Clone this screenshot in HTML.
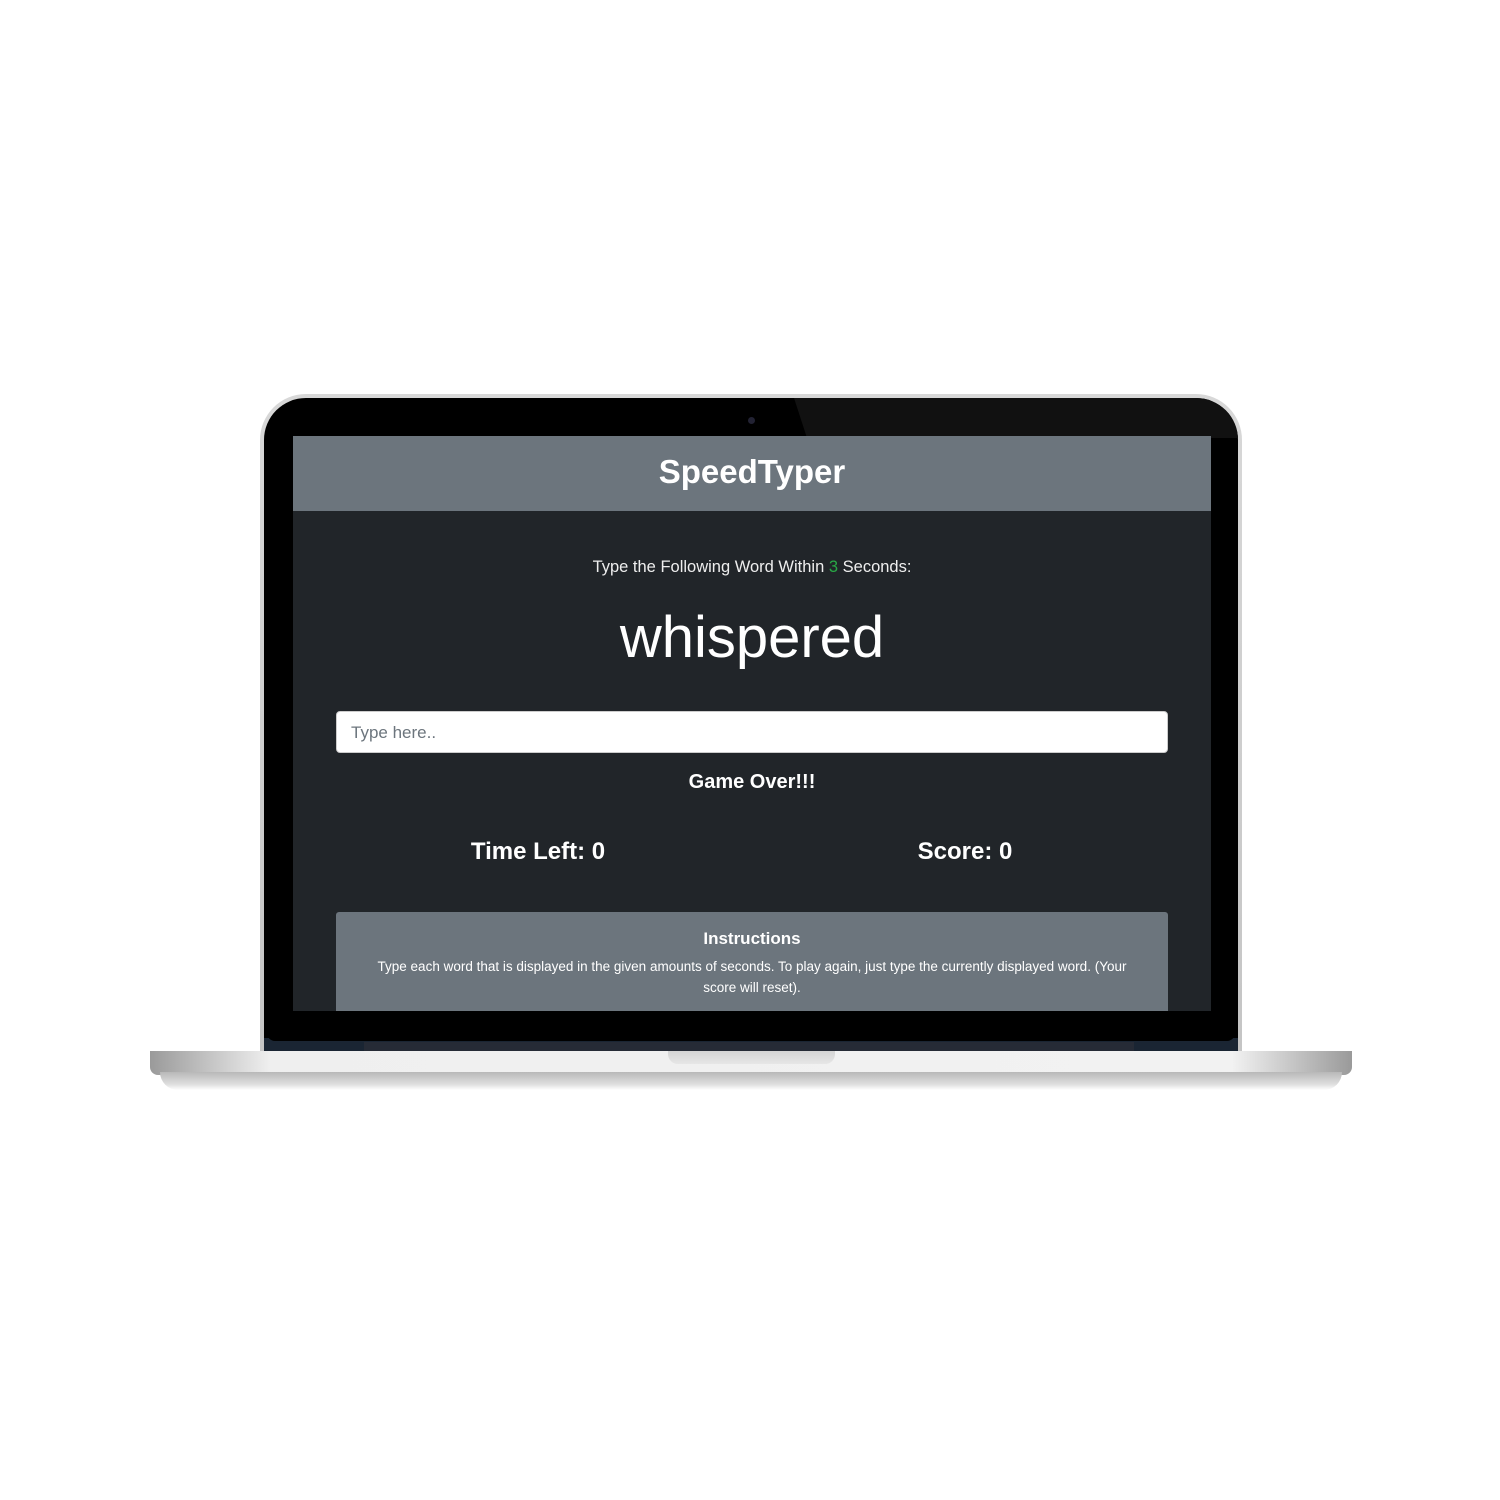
<!DOCTYPE html><html><head><style>
body{margin:0;width:1500px;height:1500px;background:#fff;position:relative;overflow:hidden;font-family:"Liberation Sans",sans-serif}
.a{position:absolute}
.c{text-align:center;color:#fff}
</style></head><body>
<div class="a" style="left:260px;top:394px;width:982px;height:680px;border-radius:46px 46px 0 0;background:linear-gradient(#d8d8d8,#c4c4c4)"></div>
<div class="a" style="left:264px;top:398px;width:974px;height:660px;border-radius:42px 42px 0 0;background:#000;overflow:hidden">
 <div class="a" style="left:530px;top:0;width:500px;height:40px;background:#111;transform:skewX(18deg);transform-origin:top left"></div>
 <div class="a" style="left:0;top:640px;width:974px;height:20px;background:#1a2533"></div>
 <div class="a" style="left:100px;top:644px;width:770px;height:16px;background:#262b36"></div>
</div>
<div class="a" style="left:267px;top:1033px;width:968px;height:8px;background:#000;border-radius:0 0 20px 20px"></div>
<div class="a" style="left:748px;top:417px;width:7px;height:7px;border-radius:50%;background:#223"></div>
<div class="a" style="left:293px;top:436px;width:918px;height:575px;background:#212529;overflow:hidden">
 <div class="a c" style="left:0;top:0;width:918px;height:75px;background:#6c757d;font-size:33px;font-weight:bold;line-height:72px">SpeedTyper</div>
 <div class="a c" style="left:0;top:122px;width:918px;font-size:16.5px;color:#eee">Type the Following Word Within <span style="color:#28a745">3</span> Seconds:</div>
 <div class="a c" style="left:0;top:168px;width:918px;font-size:58px;color:#fff;font-weight:300">whispered</div>
 <div class="a" style="left:43px;top:275px;width:832px;height:42px;background:#fff;border-radius:4px;border:1px solid #ccc;box-sizing:border-box;font-size:17px;color:#6c757d;line-height:42px;padding-left:14px">Type here..</div>
 <div class="a c" style="left:0;top:335px;width:918px;font-size:20px;font-weight:bold">Game Over!!!</div>
 <div class="a c" style="left:145px;top:402px;width:200px;font-size:24px;font-weight:bold">Time Left: 0</div>
 <div class="a c" style="left:572px;top:402px;width:200px;font-size:24px;font-weight:bold">Score: 0</div>
 <div class="a c" style="left:43px;top:476px;width:832px;height:110px;background:#6c757d;border-radius:3px">
  <div style="font-size:17px;font-weight:bold;margin-top:17px">Instructions</div>
  <div style="font-size:13.5px;line-height:21px;margin:7px 30px 0">Type each word that is displayed in the given amounts of seconds. To play again, just type the currently displayed word. (Your score will reset).</div>
 </div>
</div>
<div class="a" style="left:150px;top:1051px;width:1202px;height:24px;background:linear-gradient(90deg,#9a9a9a,#efefef 10%,#f2f2f2 90%,#9a9a9a);border-radius:0 0 8px 8px"></div>
<div class="a" style="left:160px;top:1072px;width:1182px;height:18px;background:linear-gradient(#b8b8b8,#e0e0e0 70%,#fff);border-radius:0 0 60px 60px"></div>
<div class="a" style="left:668px;top:1051px;width:167px;height:13px;background:linear-gradient(#d4d4d4,#e6e6e6);border-radius:0 0 10px 10px"></div>
</body></html>
